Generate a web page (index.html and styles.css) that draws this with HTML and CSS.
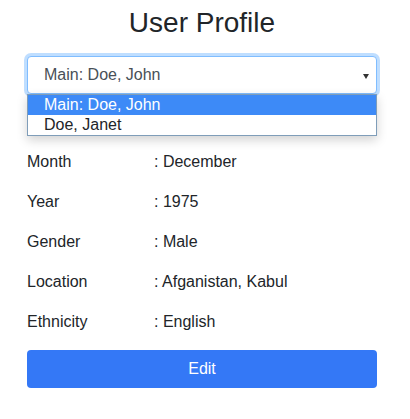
FILE: index.html
```html
<!DOCTYPE html>
<html lang="en">
<head>
<meta charset="utf-8">
<title>User Profile</title>
<link rel="stylesheet" href="styles.css">
</head>
<body>
<main class="profile">
  <h1 class="title">User Profile</h1>
  <div class="picker">
    <div class="select" role="combobox" aria-expanded="true">
      <span class="select-value">Main: Doe, John</span>
      <span class="select-arrow"></span>
    </div>
    <ul class="options" role="listbox">
      <li class="option selected" role="option">Main: Doe, John</li>
      <li class="option" role="option">Doe, Janet</li>
    </ul>
  </div>
  <dl class="details">
    <div class="row"><dt>Month</dt><dd>: December</dd></div>
    <div class="row"><dt>Year</dt><dd>: 1975</dd></div>
    <div class="row"><dt>Gender</dt><dd>: Male</dd></div>
    <div class="row"><dt>Location</dt><dd>: Afganistan, Kabul</dd></div>
    <div class="row"><dt>Ethnicity</dt><dd>: English</dd></div>
  </dl>
  <button class="btn-edit" type="button">Edit</button>
</main>
</body>
</html>
```

FILE: styles.css
```css
* { box-sizing: border-box; }
html, body {
  margin: 0;
  padding: 0;
  background: #fff;
}
body {
  font-family: "Liberation Sans", Arial, sans-serif;
  color: #212529;
  font-size: 16px;
}
.profile {
  width: 350px;
  margin-left: 27px;
  padding-top: 6px;
}
.title {
  margin: 0;
  font-size: 28px;
  font-weight: 400;
  line-height: 34px;
  text-align: center;
  color: #212529;
}
.picker {
  position: relative;
  margin-top: 16px;
}
.select {
  height: 38px;
  display: flex;
  align-items: center;
  justify-content: space-between;
  padding: 0 7px 0 16px;
  border: 1px solid #80bdff;
  border-radius: 4px;
  box-shadow: 0 0 0 3px rgba(0, 123, 255, 0.25);
  color: #495057;
  line-height: 24px;
  background: #fff;
}
.select-arrow {
  width: 0;
  height: 0;
  border-left: 3.5px solid transparent;
  border-right: 3.5px solid transparent;
  border-top: 5px solid #333;
  margin-top: 2px;
}
.options {
  position: absolute;
  left: 0;
  right: 0;
  top: 38px;
  margin: 0;
  padding: 0;
  list-style: none;
  background: #fff;
  border: 1px solid #7f9db9;
  box-shadow: 0 4px 10px rgba(0, 0, 0, 0.18);
  z-index: 2;
}
.option {
  height: 20px;
  line-height: 20px;
  padding-left: 16px;
  color: #212529;
}
.option.selected {
  background: #3d8af7;
  color: #fff;
}
.details {
  margin: 48px 0 0;
}
.row {
  display: flex;
  height: 40px;
  align-items: center;
  line-height: 24px;
}
.row dt {
  width: 127px;
}
.row dd {
  margin: 0;
}
.btn-edit {
  display: block;
  width: 100%;
  height: 38px;
  margin-top: 8px;
  border: none;
  border-radius: 4px;
  background: #3478f6;
  color: #fff;
  font-family: inherit;
  font-size: 16px;
}
```
